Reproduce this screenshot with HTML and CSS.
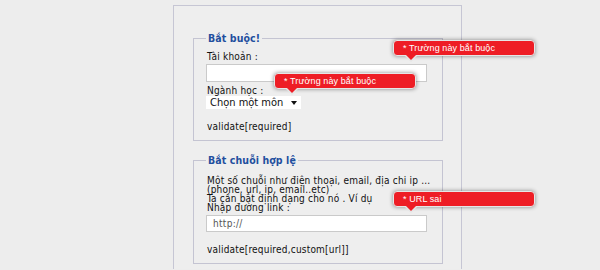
FILE: index.html
```html
<!DOCTYPE html>
<html lang="vi">
<head>
    <meta charset="UTF-8">
    <title>Validate form</title>
    <link rel="stylesheet" href="styles.css">
</head>
<body>

    <div class="panel">
        <!-- Required fields -->
        <fieldset>
            <legend>Bắt buộc!</legend>
            <label>Tài khoản :</label>
            <div class="field">
                <input type="text" class="text-input">
                <div class="form-error"><span>* Trường này bắt buộc</span></div>
            </div>
            <label class="gap">Ngành học :</label>
            <div class="field select-wrap">
                <select>
                    <option>Chọn một môn</option>
                </select>
                <div class="form-error error-select"><span>* Trường này bắt buộc</span></div>
            </div>
            <p class="rule">validate[required]</p>
        </fieldset>

        <!-- Custom rules -->
        <fieldset>
            <legend>Bắt chuỗi hợp lệ</legend>
            <p class="desc">
                Một số chuỗi như điện thoại, email, địa chi ip ...<br>
                (phone, url, ip, email..etc)<br>
                Ta cần bắt định dạng cho nó . Ví dụ<br>
                Nhập đường link :
            </p>
            <div class="field">
                <input type="text" class="text-input" placeholder="http://">
                <div class="form-error"><span>* URL sai</span></div>
            </div>
            <p class="rule">validate[required,custom[url]]</p>
        </fieldset>
    </div>

</body>
</html>
```

FILE: styles.css
```css
body, html {
    margin: 0;
    padding: 0;
    background: #ededed;
    font-family: "DejaVu Sans Condensed", "DejaVu Sans", sans-serif;
    font-stretch: condensed;
    color: #111;
}

/* Main box, it goes on below the visible part */
.panel {
    margin-left: 173px;
    margin-top: 5px;
    width: 287px;
    border: 1px solid #c6c6d4;
    border-bottom: none;
    background: #eeeeee;
    padding: 26px 0 5px 0;
}

fieldset {
    margin: 0 18px 13px 19px;
    padding: 8px 12px 8px 12px;
    border: 1px solid #c4c4d2;
    font-size: 10px;
    line-height: 10px;
    letter-spacing: 0.2px;
}

fieldset:last-child {
    margin-bottom: 0;
}

legend {
    padding: 0 2px;
    font-weight: bold;
    font-size: 10.5px;
    line-height: 12px;
    letter-spacing: 0.1px;
    color: #1f4f9e;
}

label {
    display: block;
    padding-left: 1px;
}

label.gap {
    margin-top: 4px;
}

.field {
    position: relative;
}

.text-input {
    display: block;
    box-sizing: border-box;
    width: 221px;
    height: 18px;
    margin: 2px 0 0 0;
    padding: 0 6px;
    border: 1px solid #cacaca;
    background: #fff;
    font-family: inherit;
    font-size: 10px;
    letter-spacing: 0.3px;
    color: #333;
}

.text-input::placeholder {
    color: #555;
}

.select-wrap {
    width: 95px;
}

select {
    display: block;
    appearance: none;
    -webkit-appearance: none;
    box-sizing: border-box;
    width: 95px;
    height: 13px;
    margin: 0;
    padding: 0 0 0 4px;
    border: none;
    border-radius: 0;
    background: #fff;
    font-family: inherit;
    font-stretch: condensed;
    font-size: 11px;
    line-height: 13px;
    color: #111;
}

.select-wrap::after {
    content: "";
    position: absolute;
    left: 85px;
    top: 5px;
    border-left: 3px solid transparent;
    border-right: 3px solid transparent;
    border-top: 4px solid #111;
}

.rule {
    margin: 13px 0 0 0;
    padding-left: 1px;
}

.desc {
    margin: 2px 0 0 0;
    padding-left: 1px;
    line-height: 9px;
    white-space: nowrap;
}

.desc + .field .text-input {
    margin-top: 3px;
    height: 17px;
}

/* Error bubbles */
.form-error {
    position: absolute;
    left: 187px;
    top: -24px;
    width: 140px;
    height: 14px;
    background: #ee1d25;
    border: 1px solid #e6e6e6;
    border-radius: 4px;
    box-shadow: 0 0 4px rgba(0, 0, 0, 0.45);
    font-family: "Liberation Sans", Arial, sans-serif;
    font-stretch: normal;
    font-size: 9px;
    line-height: 14px;
    letter-spacing: 0.1px;
    color: #fff;
}

.form-error span {
    padding-left: 9px;
}

.form-error::before {
    content: "";
    position: absolute;
    left: 10px;
    top: 14px;
    border-left: 7px solid transparent;
    border-right: 7px solid transparent;
    border-top: 7px solid #e6e6e6;
}

.form-error::after {
    content: "";
    position: absolute;
    left: 11px;
    top: 13px;
    border-left: 6px solid transparent;
    border-right: 6px solid transparent;
    border-top: 6px solid #ee1d25;
}

.error-select {
    left: 68px;
    top: -23px;
}
```
